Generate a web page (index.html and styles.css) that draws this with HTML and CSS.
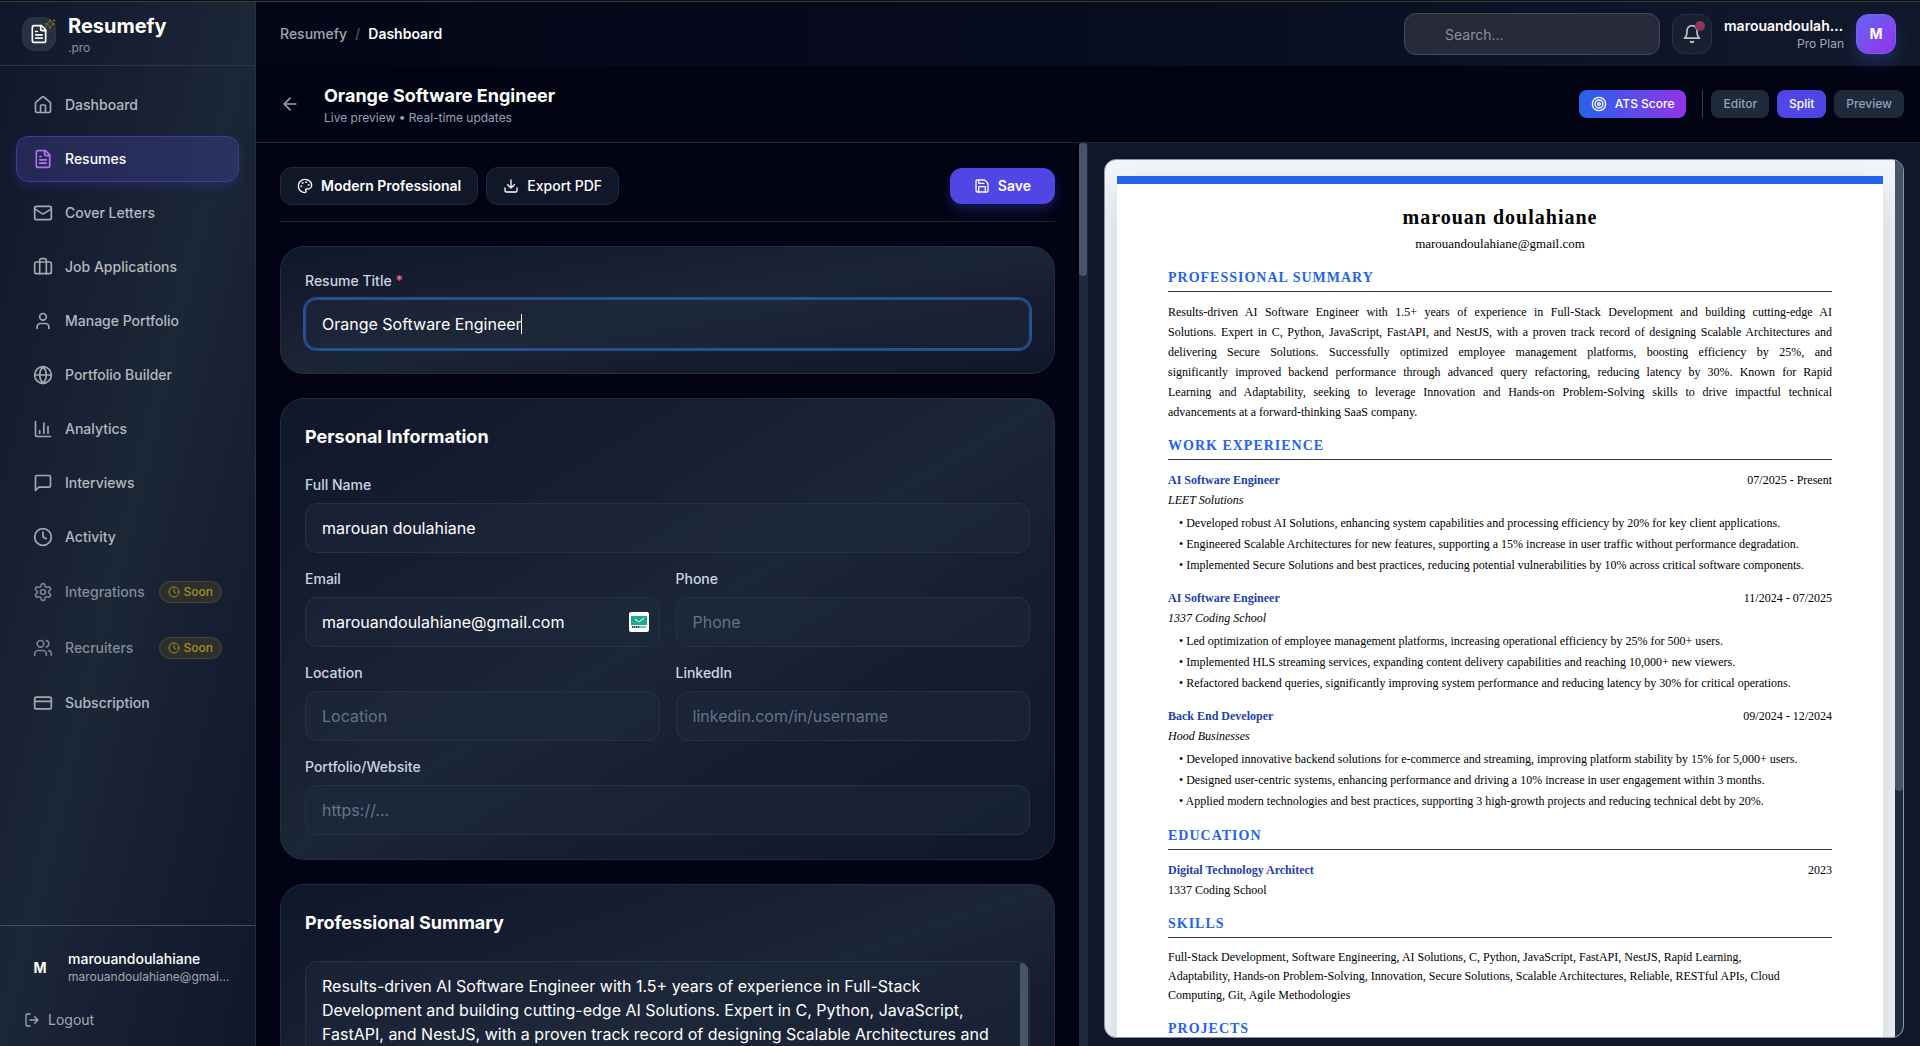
FILE: index.html
```html
<!DOCTYPE html>
<html lang="en">
<head>
    <meta charset="UTF-8">
    <meta name="viewport" content="width=device-width, initial-scale=1.0">
    <title>Resumefy.pro - Dashboard</title>
    <link rel="stylesheet" href="styles.css">
</head>
<body>
<div class="app">
    <aside class="sidebar">
        <div class="brand">
            <div class="brand-logo">
                <svg class="icon icon-20" viewBox="0 0 24 24"><path d="M15 2H6a2 2 0 0 0-2 2v16a2 2 0 0 0 2 2h12a2 2 0 0 0 2-2V7Z"/><path d="M14 2v4a2 2 0 0 0 2 2h4M10 9H8M16 13H8M16 17H8"/></svg>
                <svg class="icon brand-spark" viewBox="0 0 24 24"><path d="M9.937 15.5A2 2 0 0 0 8.5 14.063l-6.135-1.582a.5.5 0 0 1 0-.962L8.5 9.936A2 2 0 0 0 9.937 8.5l1.582-6.135a.5.5 0 0 1 .963 0L14.063 8.5A2 2 0 0 0 15.5 9.937l6.135 1.581a.5.5 0 0 1 0 .964L15.5 14.063a2 2 0 0 0-1.437 1.437l-1.582 6.135a.5.5 0 0 1-.963 0z"/><path d="M20 3v4M22 5h-4M4 17v2M5 18H3"/></svg>
            </div>
            <div>
                <div class="brand-name">Resumefy</div>
                <div class="brand-suffix">.pro</div>
            </div>
        </div>

        <nav class="nav">
            <a class="nav-item" href="#"><svg class="icon icon-20" viewBox="0 0 24 24"><path d="M3 10a2 2 0 0 1 .7-1.5l7-6a2 2 0 0 1 2.6 0l7 6A2 2 0 0 1 21 10v9a2 2 0 0 1-2 2H5a2 2 0 0 1-2-2z"/><path d="M15 21v-8a1 1 0 0 0-1-1h-4a1 1 0 0 0-1 1v8"/></svg>Dashboard</a>
            <a class="nav-item active" href="#"><svg class="icon icon-20" viewBox="0 0 24 24"><path d="M15 2H6a2 2 0 0 0-2 2v16a2 2 0 0 0 2 2h12a2 2 0 0 0 2-2V7Z"/><path d="M14 2v4a2 2 0 0 0 2 2h4M10 9H8M16 13H8M16 17H8"/></svg>Resumes</a>
            <a class="nav-item" href="#"><svg class="icon icon-20" viewBox="0 0 24 24"><rect x="2" y="4" width="20" height="16" rx="2"/><path d="m22 7-8.97 5.7a1.94 1.94 0 0 1-2.06 0L2 7"/></svg>Cover Letters</a>
            <a class="nav-item" href="#"><svg class="icon icon-20" viewBox="0 0 24 24"><path d="M16 20V4a2 2 0 0 0-2-2h-4a2 2 0 0 0-2 2v16"/><rect x="2" y="6" width="20" height="14" rx="2"/></svg>Job Applications</a>
            <a class="nav-item" href="#"><svg class="icon icon-20" viewBox="0 0 24 24"><path d="M19 21v-2a4 4 0 0 0-4-4H9a4 4 0 0 0-4 4v2"/><circle cx="12" cy="7" r="4"/></svg>Manage Portfolio</a>
            <a class="nav-item" href="#"><svg class="icon icon-20" viewBox="0 0 24 24"><circle cx="12" cy="12" r="10"/><path d="M12 2a14.5 14.5 0 0 0 0 20 14.5 14.5 0 0 0 0-20M2 12h20"/></svg>Portfolio Builder</a>
            <a class="nav-item" href="#"><svg class="icon icon-20" viewBox="0 0 24 24"><path d="M3 3v16a2 2 0 0 0 2 2h16M18 17V9M13 17V5M8 17v-3"/></svg>Analytics</a>
            <a class="nav-item" href="#"><svg class="icon icon-20" viewBox="0 0 24 24"><path d="M21 15a2 2 0 0 1-2 2H7l-4 4V5a2 2 0 0 1 2-2h14a2 2 0 0 1 2 2z"/></svg>Interviews</a>
            <a class="nav-item" href="#"><svg class="icon icon-20" viewBox="0 0 24 24"><circle cx="12" cy="12" r="10"/><path d="M12 6v6l4 2"/></svg>Activity</a>
            <a class="nav-item soon" href="#"><svg class="icon icon-20" viewBox="0 0 24 24"><path d="M12.22 2h-.44a2 2 0 0 0-2 2v.18a2 2 0 0 1-1 1.73l-.43.25a2 2 0 0 1-2 0l-.15-.08a2 2 0 0 0-2.73.73l-.22.38a2 2 0 0 0 .73 2.73l.15.1a2 2 0 0 1 1 1.72v.51a2 2 0 0 1-1 1.74l-.15.09a2 2 0 0 0-.73 2.73l.22.38a2 2 0 0 0 2.73.73l.15-.08a2 2 0 0 1 2 0l.43.25a2 2 0 0 1 1 1.73V20a2 2 0 0 0 2 2h.44a2 2 0 0 0 2-2v-.18a2 2 0 0 1 1-1.73l.43-.25a2 2 0 0 1 2 0l.15.08a2 2 0 0 0 2.73-.73l.22-.39a2 2 0 0 0-.73-2.73l-.15-.08a2 2 0 0 1-1-1.74v-.5a2 2 0 0 1 1-1.74l.15-.09a2 2 0 0 0 .73-2.73l-.22-.38a2 2 0 0 0-2.73-.73l-.15.08a2 2 0 0 1-2 0l-.43-.25a2 2 0 0 1-1-1.73V4a2 2 0 0 0-2-2z"/><circle cx="12" cy="12" r="3"/></svg>Integrations
                <span class="badge"><svg class="icon icon-12" viewBox="0 0 24 24"><circle cx="12" cy="12" r="10"/><path d="M12 6v6l4 2"/></svg>Soon</span></a>
            <a class="nav-item soon" href="#"><svg class="icon icon-20" viewBox="0 0 24 24"><path d="M16 21v-2a4 4 0 0 0-4-4H6a4 4 0 0 0-4 4v2"/><circle cx="9" cy="7" r="4"/><path d="M22 21v-2a4 4 0 0 0-3-3.87M16 3.13a4 4 0 0 1 0 7.75"/></svg>Recruiters
                <span class="badge"><svg class="icon icon-12" viewBox="0 0 24 24"><circle cx="12" cy="12" r="10"/><path d="M12 6v6l4 2"/></svg>Soon</span></a>
            <a class="nav-item" href="#"><svg class="icon icon-20" viewBox="0 0 24 24"><rect x="2" y="5" width="20" height="14" rx="2"/><path d="M2 10h20"/></svg>Subscription</a>
        </nav>

        <div class="account">
            <div class="account-user">
                <div class="account-initial">M</div>
                <div class="account-text">
                    <div class="account-name">marouandoulahiane</div>
                    <div class="account-email">marouandoulahiane@gmail.com</div>
                </div>
            </div>
            <button class="logout" type="button"><svg class="icon icon-16" viewBox="0 0 24 24"><path d="M9 21H5a2 2 0 0 1-2-2V5a2 2 0 0 1 2-2h4M16 17l5-5-5-5M21 12H9"/></svg>Logout</button>
        </div>
    </aside>

    <div class="main">
        <header class="topbar">
            <div class="crumbs"><a href="#">Resumefy</a><span class="slash">/</span><span class="current">Dashboard</span></div>
            <div class="topbar-right">
                <input class="search" type="text" placeholder="Search..." aria-label="Search">
                <button class="bell" type="button" aria-label="Notifications">
                    <svg class="icon icon-20" viewBox="0 0 24 24"><path d="M6 8a6 6 0 0 1 12 0c0 7 3 9 3 9H3s3-2 3-9M10.3 21a1.94 1.94 0 0 0 3.4 0"/></svg>
                    <span class="bell-dot"></span>
                </button>
                <div class="profile">
                    <div class="profile-name">marouandoulahiane</div>
                    <div class="profile-plan">Pro Plan</div>
                </div>
                <button class="avatar" type="button">M</button>
            </div>
        </header>

        <div class="subbar">
            <a class="back" href="#" aria-label="Back"><svg class="icon icon-20" viewBox="0 0 24 24"><path d="m12 19-7-7 7-7M19 12H5"/></svg></a>
            <div class="subbar-title">
                <h1>Orange Software Engineer</h1>
                <p>Live preview • Real-time updates</p>
            </div>
            <button class="ats" type="button"><svg class="icon icon-16" viewBox="0 0 24 24"><circle cx="12" cy="12" r="10"/><circle cx="12" cy="12" r="6"/><circle cx="12" cy="12" r="2"/></svg>ATS Score</button>
            <div class="view-switch">
                <button type="button">Editor</button>
                <button class="selected" type="button">Split</button>
                <button type="button">Preview</button>
            </div>
        </div>

        <div class="panes">
            <section class="pane editor">
                <div class="editor-scroll">
                    <div class="toolbar">
                        <button class="tool strong" type="button"><svg class="icon icon-16" viewBox="0 0 24 24"><circle cx="13.5" cy="6.5" r=".5"/><circle cx="17.5" cy="10.5" r=".5"/><circle cx="8.5" cy="7.5" r=".5"/><circle cx="6.5" cy="12.5" r=".5"/><path d="M12 2C6.5 2 2 6.5 2 12s4.5 10 10 10c.926 0 1.648-.746 1.648-1.688 0-.437-.18-.835-.437-1.125-.29-.289-.438-.652-.438-1.125a1.64 1.64 0 0 1 1.668-1.668h1.996c3.051 0 5.555-2.503 5.555-5.554C21.965 6.012 17.461 2 12 2z"/></svg>Modern Professional</button>
                        <button class="tool" type="button"><svg class="icon icon-16" viewBox="0 0 24 24"><path d="M21 15v4a2 2 0 0 1-2 2H5a2 2 0 0 1-2-2v-4M7 10l5 5 5-5M12 15V3"/></svg>Export PDF</button>
                        <button class="save" type="button"><svg class="icon icon-16" viewBox="0 0 24 24"><path d="M15.2 3a2 2 0 0 1 1.4.6l3.8 3.8a2 2 0 0 1 .6 1.4V19a2 2 0 0 1-2 2H5a2 2 0 0 1-2-2V5a2 2 0 0 1 2-2z"/><path d="M17 21v-7a1 1 0 0 0-1-1H8a1 1 0 0 0-1 1v7M7 3v4a1 1 0 0 0 1 1h7"/></svg>Save</button>
                    </div>

                    <div class="card">
                        <div class="field">
                            <label for="title">Resume Title <span class="required">*</span></label>
                            <div class="input-box">
                                <input class="focused" type="text" id="title" value="Orange Software Engineer">
                                <span class="caret"></span>
                            </div>
                        </div>
                    </div>

                    <div class="card">
                        <h2>Personal Information</h2>
                        <div class="form-grid">
                            <div class="field wide">
                                <label for="name">Full Name</label>
                                <input type="text" id="name" value="marouan doulahiane">
                            </div>
                            <div class="field">
                                <label for="email">Email</label>
                                <div class="input-box">
                                    <input type="text" id="email" value="marouandoulahiane@gmail.com">
                                    <svg class="mail-badge" viewBox="0 0 20 20"><rect width="20" height="20" rx="2" fill="#fff"/><rect x="2" y="4" width="16" height="9" fill="#1fa890"/><path d="m6 7 4 3 5-4" fill="none" stroke="#fff" stroke-width="1"/><path d="M3 15h7" stroke="#33434f" stroke-width="2" stroke-dasharray="1.5 .5"/><path d="M10 15h7" stroke="#5ed0b5" stroke-width="2"/></svg>
                                </div>
                            </div>
                            <div class="field">
                                <label for="phone">Phone</label>
                                <input type="text" id="phone" placeholder="Phone">
                            </div>
                            <div class="field">
                                <label for="location">Location</label>
                                <input type="text" id="location" placeholder="Location">
                            </div>
                            <div class="field">
                                <label for="linkedin">LinkedIn</label>
                                <input type="text" id="linkedin" placeholder="linkedin.com/in/username">
                            </div>
                            <div class="field wide">
                                <label for="website">Portfolio/Website</label>
                                <input type="text" id="website" placeholder="https://...">
                            </div>
                        </div>
                    </div>

                    <div class="card">
                        <h2>Professional Summary</h2>
                        <div class="summary-box">
                            <textarea rows="6" aria-label="Professional Summary">Results-driven AI Software Engineer with 1.5+ years of experience in Full-Stack Development and building cutting-edge AI Solutions. Expert in C, Python, JavaScript, FastAPI, and NestJS, with a proven track record of designing Scalable Architectures and delivering Secure Solutions.</textarea>
                            <div class="scroll-track"><div class="scroll-thumb"></div></div>
                        </div>
                    </div>
                </div>
                <div class="scroll-track"><div class="scroll-thumb short"></div></div>
            </section>

            <section class="pane preview">
                <div class="frame">
                    <div class="frame-scroll">
                        <article class="page">
                            <h1>marouan doulahiane</h1>
                            <p class="contact">marouandoulahiane@gmail.com</p>

                            <h2>PROFESSIONAL SUMMARY</h2>
                            <p class="justified">Results-driven AI Software Engineer with 1.5+ years of experience in Full-Stack Development and building cutting-edge AI<br>
                                Solutions. Expert in C, Python, JavaScript, FastAPI, and NestJS, with a proven track record of designing Scalable Architectures and<br>
                                delivering Secure Solutions. Successfully optimized employee management platforms, boosting efficiency by 25%, and<br>
                                significantly improved backend performance through advanced query refactoring, reducing latency by 30%. Known for Rapid<br>
                                Learning and Adaptability, seeking to leverage Innovation and Hands-on Problem-Solving skills to drive impactful technical</p>
                            <p>advancements at a forward-thinking SaaS company.</p>

                            <h2>WORK EXPERIENCE</h2>
                            <div class="entry">
                                <div class="entry-head"><h3>AI Software Engineer</h3><span>07/2025 - Present</span></div>
                                <p class="company">LEET Solutions</p>
                                <ul>
                                    <li>Developed robust AI Solutions, enhancing system capabilities and processing efficiency by 20% for key client applications.</li>
                                    <li>Engineered Scalable Architectures for new features, supporting a 15% increase in user traffic without performance degradation.</li>
                                    <li>Implemented Secure Solutions and best practices, reducing potential vulnerabilities by 10% across critical software components.</li>
                                </ul>
                            </div>
                            <div class="entry">
                                <div class="entry-head"><h3>AI Software Engineer</h3><span>11/2024 - 07/2025</span></div>
                                <p class="company">1337 Coding School</p>
                                <ul>
                                    <li>Led optimization of employee management platforms, increasing operational efficiency by 25% for 500+ users.</li>
                                    <li>Implemented HLS streaming services, expanding content delivery capabilities and reaching 10,000+ new viewers.</li>
                                    <li>Refactored backend queries, significantly improving system performance and reducing latency by 30% for critical operations.</li>
                                </ul>
                            </div>
                            <div class="entry">
                                <div class="entry-head"><h3>Back End Developer</h3><span>09/2024 - 12/2024</span></div>
                                <p class="company">Hood Businesses</p>
                                <ul>
                                    <li>Developed innovative backend solutions for e-commerce and streaming, improving platform stability by 15% for 5,000+ users.</li>
                                    <li>Designed user-centric systems, enhancing performance and driving a 10% increase in user engagement within 3 months.</li>
                                    <li>Applied modern technologies and best practices, supporting 3 high-growth projects and reducing technical debt by 20%.</li>
                                </ul>
                            </div>

                            <h2>EDUCATION</h2>
                            <div class="entry">
                                <div class="entry-head"><h3>Digital Technology Architect</h3><span>2023</span></div>
                                <p>1337 Coding School</p>
                            </div>

                            <h2>SKILLS</h2>
                            <p class="skills">Full-Stack Development, Software Engineering, AI Solutions, C, Python, JavaScript, FastAPI, NestJS, Rapid Learning,<br>
                                Adaptability, Hands-on Problem-Solving, Innovation, Secure Solutions, Scalable Architectures, Reliable, RESTful APIs, Cloud<br>
                                Computing, Git, Agile Methodologies</p>

                            <h2>PROJECTS</h2>
                        </article>
                    </div>
                    <div class="scroll-track narrow"><div class="scroll-thumb long"></div></div>
                </div>
            </section>
        </div>
    </div>
</div>
</body>
</html>
```
FILE: styles.css
```css
* {
    box-sizing: border-box;
}

body {
    margin: 0;
    padding-top: 1px;
    background-color: #0b0b10;
    color: #fff;
    font-family: Inter, "Liberation Sans", sans-serif;
    font-size: 14px;
    line-height: 20px;
}

h1, h2, h3, p, ul {
    margin: 0;
    padding: 0;
}

a {
    color: inherit;
    text-decoration: none;
}

button, input, textarea {
    font-family: inherit;
    color: inherit;
}

button {
    display: flex;
    align-items: center;
    justify-content: center;
    gap: 8px;
    padding: 0;
    border: none;
    font-size: 14px;
    line-height: 20px;
    cursor: pointer;
}

.icon {
    flex: none;
    fill: none;
    stroke: currentColor;
    stroke-width: 2;
    stroke-linecap: round;
    stroke-linejoin: round;
}

.icon-20 {
    width: 20px;
    height: 20px;
}

.icon-16 {
    width: 16px;
    height: 16px;
}

.icon-12 {
    width: 12px;
    height: 12px;
}

.app {
    display: flex;
    height: calc(100vh - 1px);
    border-top: 1px solid #3c3e40;
    background-color: #020413;
    overflow: hidden;
}

/* sidebar */

.sidebar {
    display: flex;
    flex-direction: column;
    flex: none;
    width: 256px;
    border-right: 1px solid #242e40;
    background: linear-gradient(to bottom right, #0f172a, #182033 32%, #1b2736 50%, #182033 66%, #0f172a);
}

.brand {
    display: flex;
    align-items: center;
    gap: 12px;
    height: 64px;
    padding: 0 22px;
    border-bottom: 1px solid #2b3646;
}

.brand-logo {
    position: relative;
    display: flex;
    align-items: center;
    justify-content: center;
    width: 34px;
    height: 34px;
    border: 1px solid #2b3646;
    border-radius: 12px;
    background-color: #263241;
}

.brand-spark {
    position: absolute;
    top: 0;
    right: -1px;
    width: 12px;
    height: 12px;
    color: #80652c;
}

.brand-name {
    font-size: 20px;
    font-weight: 700;
    line-height: 28px;
}

.brand-suffix {
    color: #8a929e;
    font-size: 12px;
    line-height: 16px;
}

.nav {
    display: flex;
    flex-direction: column;
    flex: 1;
    gap: 8px;
    padding: 16px 16px 0;
}

.nav-item {
    display: flex;
    align-items: center;
    gap: 12px;
    padding: 12px 16px;
    border: 1px solid transparent;
    border-radius: 12px;
    color: #b4b8bf;
    font-weight: 500;
}

.nav-item .icon-20 {
    opacity: 0.9;
}

.nav-item.active {
    border-color: #403b94;
    background: linear-gradient(90deg, #242854, #2b325f);
    box-shadow: 0 4px 12px rgba(79, 70, 229, 0.2);
    color: #fff;
}

.nav-item.active .icon {
    color: #c27bff;
}

.nav-item.soon {
    color: #868c96;
}

.badge {
    display: flex;
    align-items: center;
    gap: 4px;
    margin-left: auto;
    padding: 2px 8px;
    border: 1px solid #4d462c;
    border-radius: 11px;
    background-color: #2b302f;
    color: #ab8c1c;
    font-size: 12px;
    font-weight: 500;
    line-height: 16px;
}

.account {
    padding: 24px 24px 8px;
    border-top: 1px solid #445062;
}

.account-user {
    display: flex;
    align-items: center;
    gap: 12px;
}

.account-initial {
    flex: none;
    width: 32px;
    font-weight: 700;
    text-align: center;
}

.account-text {
    min-width: 0;
}

.account-name {
    font-weight: 500;
    line-height: 18px;
}

.account-email {
    overflow: hidden;
    color: #a3a8b0;
    font-size: 12px;
    line-height: 18px;
    text-overflow: ellipsis;
    white-space: nowrap;
}

.logout {
    margin-top: 16px;
    padding: 8px 0;
    background: none;
    color: #a3a8b0;
}

/* top bars */

.main {
    display: flex;
    flex-direction: column;
    flex: 1;
    min-width: 0;
}

.topbar {
    display: flex;
    align-items: center;
    justify-content: space-between;
    height: 64px;
    padding: 0 24px;
    background: linear-gradient(90deg, #030617, #070c1e 50%, #0f172a 90%);
}

.crumbs {
    display: flex;
    gap: 8px;
    color: #a0a5ad;
    font-weight: 500;
}

.slash {
    color: #4c5260;
}

.current {
    color: #fff;
    font-weight: 600;
}

.topbar-right {
    display: flex;
    align-items: center;
    gap: 12px;
}

.search {
    width: 256px;
    height: 42px;
    padding: 0 16px 0 40px;
    border: 1px solid #474b59;
    border-radius: 12px;
    background-color: #262a3a;
    font-size: 14px;
}

.search::placeholder {
    color: #8c909b;
}

.bell {
    position: relative;
    width: 40px;
    height: 40px;
    border: 1px solid #242f41;
    border-radius: 12px;
    background-color: #162030;
    color: #c0c4ca;
}

.bell-dot {
    position: absolute;
    top: 6px;
    right: 6px;
    width: 10px;
    height: 10px;
    border-radius: 50%;
    background-color: #8b3558;
}

.profile {
    width: 120px;
    text-align: right;
}

.profile-name {
    overflow: hidden;
    font-weight: 600;
    line-height: 20px;
    text-overflow: ellipsis;
    white-space: nowrap;
}

.profile-plan {
    color: #a3a8b0;
    font-size: 12px;
    line-height: 16px;
}

.avatar {
    width: 40px;
    height: 40px;
    border: 1px solid #7562f5;
    border-radius: 12px;
    background: linear-gradient(135deg, #6366f1, #9333ea);
    box-shadow: 0 8px 16px rgba(99, 102, 241, 0.25);
    font-weight: 700;
}

.subbar {
    display: flex;
    align-items: center;
    padding: 16px 16px 16px 24px;
    border-bottom: 1px solid #1e2738;
}

.back {
    display: flex;
    margin-right: 24px;
    color: #94a3b8;
}

.subbar-title {
    flex: 1;
}

.subbar-title h1 {
    font-size: 18px;
    font-weight: 700;
    line-height: 28px;
}

.subbar-title p {
    color: #94a3b8;
    font-size: 12px;
    line-height: 16px;
}

.ats {
    padding: 6px 12px;
    border-radius: 8px;
    background: linear-gradient(90deg, #2563eb, #9333ea);
    font-size: 12px;
    font-weight: 500;
    line-height: 16px;
}

.view-switch {
    display: flex;
    gap: 8px;
    margin-left: 16px;
    padding-left: 8px;
    border-left: 1px solid #334155;
}

.view-switch button {
    padding: 6px 12px;
    border-radius: 8px;
    background-color: #1e293b;
    color: #94a3b8;
    font-size: 12px;
    font-weight: 500;
    line-height: 16px;
}

.view-switch .selected {
    background-color: #4f46e5;
    color: #fff;
}

.panes {
    display: grid;
    grid-template-columns: 1fr 1fr;
    grid-template-rows: 100%;
    flex: 1;
    min-height: 0;
}

.pane {
    min-width: 0;
    min-height: 0;
}

.scroll-track {
    flex: none;
    width: 9px;
    background-color: #1e293b;
}

.scroll-track.narrow {
    width: 8px;
}

.scroll-thumb {
    width: 8px;
    height: 100%;
    border-radius: 4px;
    background-color: #475569;
}

.scroll-thumb.short {
    height: 133px;
}

.scroll-thumb.long {
    height: 72%;
}

/* editor */

.editor {
    display: flex;
}

.editor-scroll {
    flex: 1;
    min-width: 0;
    padding: 24px;
    overflow: hidden;
}

.toolbar {
    display: flex;
    align-items: center;
    gap: 8px;
    margin-bottom: 24px;
    padding-bottom: 16px;
    border-bottom: 1px solid #1e2738;
}

.tool {
    padding: 8px 16px;
    border: 1px solid #1f2a3b;
    border-radius: 12px;
    background-color: #0f1729;
    font-weight: 500;
}

.tool.strong {
    font-weight: 600;
}

.save {
    margin-left: auto;
    padding: 8px 24px;
    border-radius: 12px;
    background-color: #4f46e5;
    box-shadow: 0 6px 12px rgba(79, 70, 229, 0.3);
    font-weight: 600;
}

.card {
    margin-bottom: 24px;
    padding: 24px;
    border: 1px solid #222d3f;
    border-radius: 24px;
    background: linear-gradient(to bottom right, #0f172a, #181f32 32%, #1b2636 50%, #171e31 66%, #0f172a);
}

.card h2 {
    margin-bottom: 24px;
    font-size: 18px;
    font-weight: 700;
    line-height: 28px;
}

.form-grid {
    display: grid;
    grid-template-columns: 1fr 1fr;
    gap: 16px;
}

.wide {
    grid-column: 1 / -1;
}

.field label {
    display: block;
    margin-bottom: 8px;
    color: #cbd5e1;
    font-weight: 500;
}

.required {
    color: #f87171;
}

.field input {
    display: block;
    width: 100%;
    height: 50px;
    padding: 0 16px;
    border: 1px solid #263244;
    border-radius: 12px;
    outline: none;
    background-color: rgba(30, 41, 59, 0.5);
    font-size: 16px;
}

.field input::placeholder {
    color: #64748b;
    opacity: 1;
}

.field .focused {
    border-color: #284f92;
    box-shadow: 0 0 0 2px #284f92;
}

.input-box {
    position: relative;
}

.caret {
    position: absolute;
    top: 15px;
    left: 216px;
    width: 1px;
    height: 20px;
    background-color: #fff;
}

.mail-badge {
    position: absolute;
    top: 15px;
    right: 11px;
    width: 20px;
    height: 20px;
}

.summary-box {
    display: flex;
    border: 1px solid #263244;
    border-radius: 12px;
    background-color: rgba(30, 41, 59, 0.5);
    overflow: hidden;
}

.summary-box textarea {
    display: block;
    flex: 1;
    padding: 12px 16px;
    border: none;
    outline: none;
    background: none;
    font-size: 16px;
    line-height: 24px;
    resize: none;
    overflow: hidden;
}

/* resume preview */

.preview {
    padding: 16px 16px 8px;
    background-color: #0f172a;
}

.frame {
    display: flex;
    height: 100%;
    border: 1px solid #8b94a5;
    border-radius: 12px;
    background-color: #f1f5f9;
    overflow: hidden;
}

.frame-scroll {
    flex: 1;
    min-width: 0;
    padding: 16px 12px;
    overflow: hidden;
}

.page {
    min-height: 1083px;
    padding: 19px 51px;
    border-top: 8px solid #2563eb;
    background-color: #fff;
    box-shadow: 0 16px 32px rgba(0, 0, 0, 0.15);
    color: #000;
    font-family: "Liberation Serif", "Times New Roman", serif;
    font-size: 12px;
    line-height: 20px;
}

.page h1 {
    font-size: 20px;
    letter-spacing: 1px;
    line-height: 28px;
    text-align: center;
}

.contact {
    margin-top: 3px;
    font-size: 13px;
    text-align: center;
}

.page h2 {
    margin: 14px 0 10px;
    padding-bottom: 3px;
    border-bottom: 1px solid #333;
    color: #2563eb;
    font-size: 14px;
    letter-spacing: 1px;
    line-height: 20px;
}

.justified {
    text-align: justify;
    text-align-last: justify;
}

.entry {
    margin-bottom: 12px;
}

.entry-head {
    display: flex;
    justify-content: space-between;
}

.entry h3 {
    color: #1e40af;
    font-size: 12px;
}

.company {
    font-style: italic;
}

.entry ul {
    margin-top: 3px;
    padding-left: 11px;
    line-height: 21px;
    list-style: none;
}

.entry li::before {
    content: "• ";
}

.skills {
    line-height: 19px;
}
```
